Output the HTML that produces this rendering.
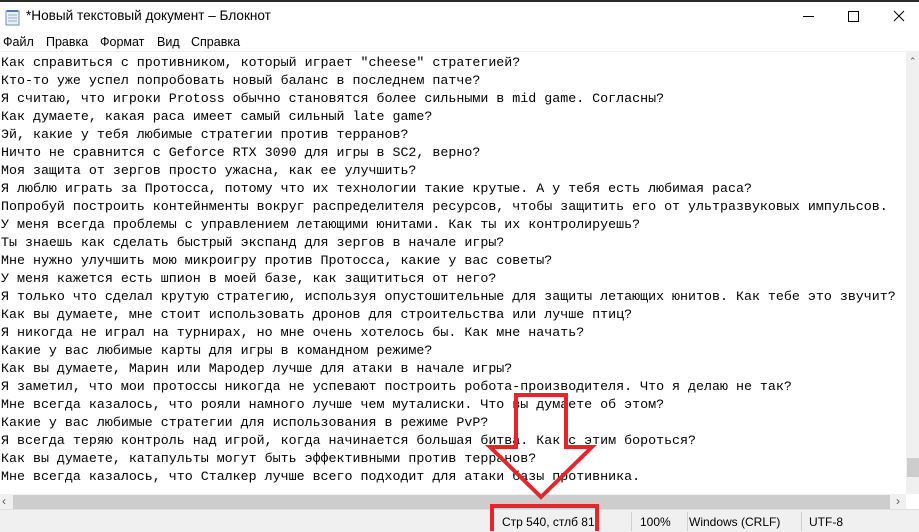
<html><head><style>
body{margin:0;width:919px;height:531px;overflow:hidden;background:#fff;font-family:"Liberation Sans",sans-serif;position:relative}
.abs{position:absolute}
.t{font-family:"Liberation Mono",monospace;font-size:13.32px;line-height:18px;white-space:pre;color:#000}
.m{position:absolute;top:35px;font-size:12.5px}
</style></head><body>
<div class="abs" style="left:0;top:0;width:919px;height:2px;background:#2b2b2b"></div>
<svg class="abs" style="left:5px;top:8px" width="16" height="18"><rect x="1" y="3" width="13" height="14" fill="#e8f0f8" stroke="#6a8fb8"/><path d="M3 7h9M3 10h9M3 13h9" stroke="#9ab"/><path d="M2 3h11" stroke="#4a7ab8" stroke-width="2"/></svg>
<div class="abs" style="left:26px;top:8px;font-size:13.6px">*Новый текстовый документ – Блокнот</div>
<div class="abs" style="left:803px;top:16px;width:11px;height:1px;background:#000"></div>
<div class="abs" style="left:848px;top:11px;width:9px;height:9px;border:1px solid #000"></div>
<svg class="abs" style="left:893px;top:10px" width="12" height="12"><path d="M1 1L11 11M11 1L1 11" stroke="#000"/></svg>
<div class="m" style="left:3px">Файл</div>
<div class="m" style="left:46px">Правка</div>
<div class="m" style="left:100px">Формат</div>
<div class="m" style="left:157px">Вид</div>
<div class="m" style="left:191px">Справка</div>
<div class="abs" style="left:0;top:51px;width:919px;height:1px;background:#f0f0f0"></div>
<div class="abs t" style="left:1px;top:54px">Как справиться с противником, который играет "cheese" стратегией?
Кто-то уже успел попробовать новый баланс в последнем патче?
Я считаю, что игроки Protoss обычно становятся более сильными в mid game. Согласны?
Как думаете, какая раса имеет самый сильный late game?
Эй, какие у тебя любимые стратегии против терранов?
Ничто не сравнится с Geforce RTX 3090 для игры в SC2, верно?
Моя защита от зергов просто ужасна, как ее улучшить?
Я люблю играть за Протосса, потому что их технологии такие крутые. А у тебя есть любимая раса?
Попробуй построить контейнменты вокруг распределителя ресурсов, чтобы защитить его от ультразвуковых импульсов.
У меня всегда проблемы с управлением летающими юнитами. Как ты их контролируешь?
Ты знаешь как сделать быстрый экспанд для зергов в начале игры?
Мне нужно улучшить мою микроигру против Протосса, какие у вас советы?
У меня кажется есть шпион в моей базе, как защититься от него?
Я только что сделал крутую стратегию, используя опустошительные для защиты летающих юнитов. Как тебе это звучит?
Как вы думаете, мне стоит использовать дронов для строительства или лучше птиц?
Я никогда не играл на турнирах, но мне очень хотелось бы. Как мне начать?
Какие у вас любимые карты для игры в командном режиме?
Как вы думаете, Марин или Мародер лучше для атаки в начале игры?
Я заметил, что мои протоссы никогда не успевают построить робота-производителя. Что я делаю не так?
Мне всегда казалось, что рояли намного лучше чем муталиски. Что вы думаете об этом?
Какие у вас любимые стратегии для использования в режиме PvP?
Я всегда теряю контроль над игрой, когда начинается большая битва. Как с этим бороться?
Как вы думаете, катапульты могут быть эффективными против терранов?
Мне всегда казалось, что Сталкер лучше всего подходит для атаки базы противника.</div>
<div class="abs" style="left:906px;top:52px;width:13px;height:442px;background:#f0f0f0"></div>
<div class="abs" style="left:907px;top:458px;width:12px;height:19px;background:#cdcdcd"></div>
<div class="abs" style="left:909px;top:56px;font-size:9px;color:#555">⌃</div>
<div class="abs" style="left:0;top:494px;width:906px;height:15px;background:#f0f0f0"></div>
<div class="abs" style="left:13px;top:495px;width:877px;height:14px;background:#cdcdcd"></div>
<div class="abs" style="left:2px;top:494px;font-size:12px;color:#555">‹</div>
<div class="abs" style="left:896px;top:494px;font-size:12px;color:#555">›</div>
<div class="abs" style="left:0;top:509px;width:919px;height:22px;background:#f0f0f0;border-top:1px solid #e0e0e0"></div>
<div class="abs" style="left:631px;top:512px;width:1px;height:19px;background:#d0d0d0"></div>
<div class="abs" style="left:687px;top:512px;width:1px;height:19px;background:#d0d0d0"></div>
<div class="abs" style="left:801px;top:512px;width:1px;height:19px;background:#d0d0d0"></div>
<div class="abs" style="left:502px;top:515px;font-size:12px">Стр 540, стлб 81</div>
<div class="abs" style="left:640px;top:515px;font-size:12px">100%</div>
<div class="abs" style="left:689px;top:515px;font-size:12px">Windows (CRLF)</div>
<div class="abs" style="left:809px;top:515px;font-size:12px">UTF-8</div>
<svg class="abs" style="left:0;top:0" width="919" height="531"><path d="M516 395H566V447H592L541 497L490 447H516Z" fill="none" stroke="#e4262c" stroke-width="4"/><rect x="492" y="506" width="105" height="27" fill="none" stroke="#e4262c" stroke-width="4"/></svg>
</body></html>
